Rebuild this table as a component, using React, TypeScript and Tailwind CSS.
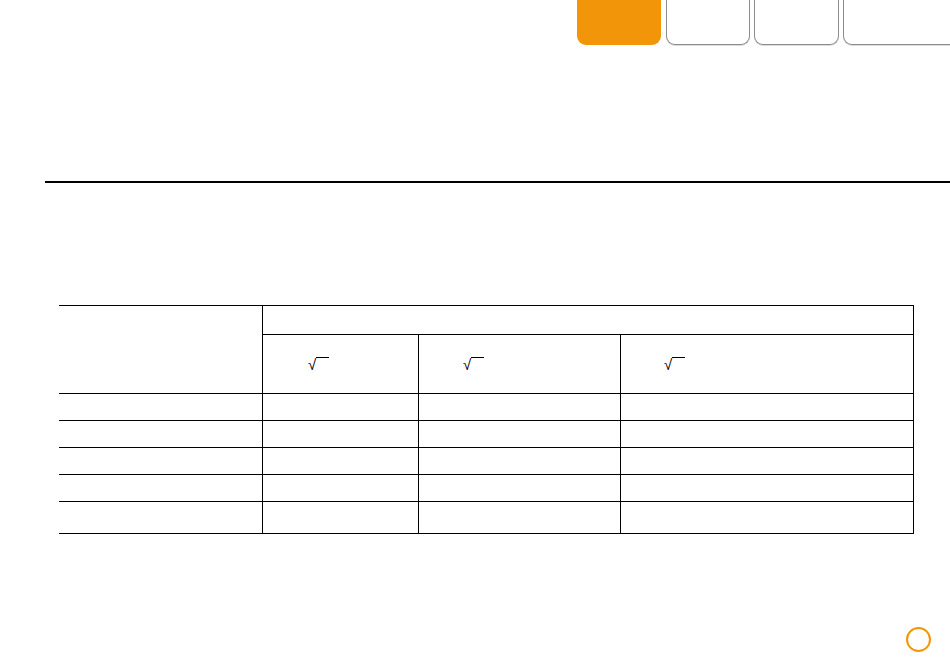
const Tab = ({ active, className }: { active?: boolean; className?: string }) => (
    <div
        className={
            active
                ? `h-[45px] shrink-0 rounded-b-[9px] bg-[#f39508] ${className ?? ''}`
                : `h-[45px] shrink-0 rounded-b-[9px] border-x border-b border-[#8c8c8c] bg-white shadow-[0_1px_0_#dcdcdc] ${className ?? ''}`
        }
    />
);

const Root = () => (
    <span className="inline-flex items-start text-[15px] leading-none text-black">
        <span className="font-['Liberation_Sans',sans-serif]">√</span>
        <span className="inline-block h-0 w-[13px] border-t border-black" />
    </span>
);

const cell = 'border-r border-b border-black';

export default function App() {
    const body = [0, 1, 2, 3, 4];

    return (
        <div className="w-[950px] h-[670px] overflow-hidden bg-white font-['Liberation_Sans',sans-serif]">
            {/* tab strip */}
            <div className="flex pl-[577px]">
                <Tab active className="w-[84px]" />
                <Tab className="ml-[5px] w-[84px]" />
                <Tab className="ml-[4px] w-[85px]" />
                <Tab className="ml-[4px] w-[120px]" />
            </div>

            <div className="ml-[45px] mt-[136px] h-[1.5px] bg-black" />

            {/* table */}
            <div className="ml-[59px] mt-[122.5px] w-[855px] border-t border-black grid grid-cols-[204px_156px_202px_293px] grid-rows-[29px_59px_27px_27px_27px_27px_32px]">
                <div className={`row-span-2 ${cell}`} />
                <div className={`col-span-3 ${cell}`} />
                <div className={`${cell} flex items-center pl-[45px]`}>
                    <Root />
                </div>
                <div className={`${cell} flex items-center pl-[44px]`}>
                    <Root />
                </div>
                <div className={`${cell} flex items-center pl-[43px]`}>
                    <Root />
                </div>
                {body.map((r) => (
                    <div key={r} className="contents">
                        <div className={cell} />
                        <div className={cell} />
                        <div className={cell} />
                        <div className={cell} />
                    </div>
                ))}
            </div>

            {/* page marker */}
            <div className="mt-[93px] flex justify-end pr-[19px]">
                <div className="h-[25px] w-[25px] rounded-full border-2 border-[#f39508]" />
            </div>
        </div>
    );
}
